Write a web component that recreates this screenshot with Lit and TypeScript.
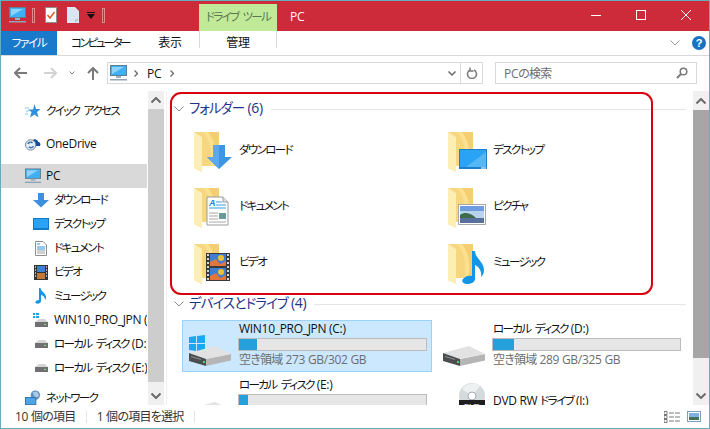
import { LitElement, html, css, svg } from 'lit';
import { customElement } from 'lit/decorators.js';

// kana in the reference font is much narrower than Noto's, so runs get their own tracking
const jp = (text: string) =>
  text
    .split(/([\u30A0-\u30FF]+(?: [\u30A0-\u30FF]+)*|[\u3040-\u309F\u4E00-\u9FFF]+)/)
    .filter((p) => p)
    .map((p) =>
      /^[\u30A0-\u30FF]/.test(p)
        ? html`<span class="k">${p}</span>`
        : /^[\u3040-\u309F\u4E00-\u9FFF]/.test(p)
          ? html`<span class="h">${p}</span>`
          : p
    );

const folderBack = svg`
  <path d="M0 0H25V34H8V40L0 36Z" fill="#f6d77f"/>
  <path d="M9 0H25V34H16C19 24 17 8 9 0Z" fill="#fbe08f"/>
  <path d="M14 0H25V34H20C23 22 21 8 14 0Z" fill="#f3cf72"/>
  <path d="M0 0L8 5V40L0 36Z" fill="#fdeeb4"/>
  <path d="M8 34H14V40H8Z" fill="#ffffff"/>`;

const overlays: Record<string, unknown> = {
  down: svg`<path d="M19 13H31V25H38L25 37L13 25H19Z" fill="#3e95e4"/><path d="M19 13H25V37L13 25H19Z" fill="#5aa9ec"/>`,
  desktop: svg`<g transform="translate(-4 0)"><rect x="15" y="17" width="28" height="20" fill="#1c7fcb"/><rect x="16" y="18" width="26" height="17" fill="#2ba3f5"/><path d="M22 35L42 20V35Z" fill="#54b8f7"/><rect x="37" y="35.500" width="5" height="1" fill="#fff"/></g>`,
  doc: svg`<path d="M13 9H29L34 14V37H13Z" fill="#fff" stroke="#9b9b9b"/><path d="M29 9V14H34" fill="#e4e4e4" stroke="#9b9b9b"/><text x="15" y="18" font-size="9" font-weight="700" font-style="italic" fill="#1f7fd6" font-family="Liberation Sans">A</text><path d="M22 14H28M22 17H32M15 20H32" stroke="#3f9be3"/><path d="M15 25H24M15 28H24M15 31H24M15 34H32" stroke="#a8a8a8"/><rect x="25" y="25" width="7" height="6" fill="#6b9a9a"/>`,
  film: svg`<rect x="12" y="9" width="24" height="28" fill="#3a3a3a"/><rect x="16" y="10" width="16" height="12" fill="#3d7fd6"/><rect x="16" y="24" width="16" height="12" fill="#3d7fd6"/><path d="M16 22V18L22 15L26 20L32 17V22ZM16 36V32L22 29L26 34L32 31V36Z" fill="#e2763a"/><circle cx="27" cy="14" r="3" fill="#f0c030"/><circle cx="27" cy="28" r="3" fill="#f0c030"/><path d="M13 11h2M13 15h2M13 19h2M13 23h2M13 27h2M13 31h2M13 35h2M33 11h2M33 15h2M33 19h2M33 23h2M33 27h2M33 31h2M33 35h2" stroke="#d8d8d8" stroke-width="2"/>`,
  picture: svg`<g transform="translate(-4 0)"><rect x="14.500" y="16.500" width="27" height="20" fill="#fff" stroke="#a8a8a8"/><rect x="16" y="18" width="24" height="17" fill="#b8d4ec"/><rect x="16" y="18" width="24" height="5" fill="#6f9be0"/><path d="M16 27C22 23 28 26 32 30H40V31H16Z" fill="#3f6a4c"/><rect x="16" y="30" width="24" height="5" fill="#57719a"/></g>`,
  music: svg`<path d="M24 7H27C27 14 36 18 36 26C36 29 35 31 33 33C34 27 31 23 27 21V35C27 38 23 40 19 40C15 40 13 37 15 35C17 32 21 31 24 32Z" fill="#1296e8"/>`,
};

const folderIcon = (kind: string) => html`<svg class="folder" width="45" height="50" viewBox="0 0 45 50">${folderBack}${overlays[kind]}</svg>`;

const pcIcon = html`<svg width="17" height="16" viewBox="0 0 17 16"><rect x=".5" y=".5" width="16" height="10" fill="#3fb0f4" stroke="#5f7f96"/><path d="M2 9L14 2H2Z" fill="#8ed3fa"/><rect x="6" y="11" width="5" height="2" fill="#9db2c0"/><rect y="14" width="17" height="1.500" fill="#8fa5b5"/></svg>`;

const driveSmall = html`<svg width="15" height="10" viewBox="0 0 15 10"><path d="M1 4L5 1H11L14 4Z" fill="#d4d4d4"/><rect x="1" y="4" width="13" height="5" fill="#707070"/><rect x="10" y="6" width="2" height="1" fill="#7fe07f"/></svg>`;

const navIcons: Record<string, unknown> = {
  star: html`<svg width="16" height="16" viewBox="0 0 16 16"><path d="M9.500 1L11 6H15.500L12 9L13.500 14.500L9.500 11.500L5 14.500L6.500 9L3 6.500H8Z" fill="#2f8fe0"/><path d="M0 5H4M1 8H4M0 11H3" stroke="#8fc4ee"/></svg>`,
  cloud: html`<svg width="17" height="16" viewBox="0 0 17 16"><path d="M7 6C8 2 13 2 14 6C16 6 17 8 16 10H7Z" fill="#0f4f9c"/><circle cx="6" cy="9" r="5.500" fill="#e8eef5" stroke="#6e8092"/><path d="M3 8A3 3 0 0 1 8 7M9 10A3 3 0 0 1 4 11" stroke="#2f6fb5" fill="none" stroke-width="1.500"/></svg>`,
  pc: pcIcon,
  down: html`<svg width="16" height="16" viewBox="0 0 16 16"><path d="M5 1H11V8H16L8 15.500L0 8H5Z" fill="#3e8fdf"/></svg>`,
  desktop: html`<svg width="16" height="12" viewBox="0 0 16 12"><rect width="16" height="12" fill="#1479c4"/><rect x="1" y="1" width="14" height="9" fill="#2ba3f5"/></svg>`,
  doc: html`<svg width="12" height="15" viewBox="0 0 12 15"><path d="M.5 .5H8L11.500 4V14.500H.5Z" fill="#fff" stroke="#8c8c8c"/><path d="M2 3H5M2 6H10M2 8H10" stroke="#2f8fe0"/><path d="M2 10H10M2 12H10" stroke="#a0a0a0"/></svg>`,
  film: html`<svg width="14" height="15" viewBox="0 0 14 15"><rect width="14" height="15" fill="#333"/><rect x="3" y="1" width="8" height="6" fill="#3d7fd6"/><rect x="3" y="8" width="8" height="6" fill="#c0783a"/><path d="M1 2h1M1 5h1M1 8h1M1 11h1M12 2h1M12 5h1M12 8h1M12 11h1" stroke="#ddd" stroke-width="1.500"/></svg>`,
  music: html`<svg width="12" height="16" viewBox="0 0 12 16"><path d="M4 0H5.500C6 4 11 5 11 9C11 10.500 10.500 11.500 10 12C10 9 8 7.500 6 7V13C6 15 3.500 16 1.500 15.500C-.5 15 0 12.500 4 12Z" fill="#1296e8"/></svg>`,
  winDrive: html`<svg width="16" height="15" viewBox="0 0 16 15"><path d="M0 0h2v2H0zM3 0h3v2H3zM0 3h2v2H0zM3 3h3v2H3z" fill="#18a0e8"/><g transform="translate(1 5)">${driveSmall}</g></svg>`,
  drive: html`<svg width="16" height="10" viewBox="0 0 16 10"><g transform="translate(1 0)">${driveSmall}</g></svg>`,
  network: html`<svg width="17" height="16" viewBox="0 0 17 16"><circle cx="11" cy="5" r="5" fill="#5e93c4"/><path d="M8 2L13 1L15 6L11 8Z" fill="#a9cbe6"/><rect x=".5" y="7.500" width="11" height="7.500" fill="#4ba5ea" stroke="#3a6f9c"/></svg>`,
};

const bigDrive = (win: boolean) => html`<svg width="46" height="34" viewBox="0 0 46 34">
  ${win ? svg`<path d="M1 2L8 1V8H1ZM9 1L17 0V8H9ZM1 9H8V16L1 15ZM9 9H17V17L9 16Z" fill="#18a9ee"/>` : ''}
  <path d="M18 24L43 19V25.500L18 31Z" fill="#b5b5b5"/>
  <path d="M1 18L27 11L43 19L18 24Z" fill="#e2e2e2"/>
  <path d="M1 18L18 24V31L1 26Z" fill="#4b4d4f"/>
  <path d="M3 21L13 24V25L3 22Z" fill="#8d8f91"/>
  <rect x="15" y="26" width="2" height="2" fill="#4bd06b"/>
</svg>`;

const dvdIcon = html`<svg width="46" height="34" viewBox="0 0 46 34"><circle cx="30" cy="13" r="13" fill="#d5dadd"/><path d="M30 13L20 6A13 13 0 0 1 38 3Z" fill="#eef1f2"/><circle cx="30" cy="13" r="4" fill="#fff" stroke="#a5adb3"/><rect x="17" y="17" width="26" height="10" fill="#1e1e1e"/><text x="30" y="25.500" text-anchor="middle" font-size="8" fill="#fff" font-family="Liberation Sans">DVD</text></svg>`;

const navItems = [
  { icon: 'star', label: 'クイック アクセス', cls: 'top' },
  { icon: 'cloud', label: 'OneDrive', cls: 'top gap' },
  { icon: 'pc', label: 'PC', cls: 'top sel' },
  { icon: 'down', label: 'ダウンロード', cls: 'sub' },
  { icon: 'desktop', label: 'デスクトップ', cls: 'sub' },
  { icon: 'doc', label: 'ドキュメント', cls: 'sub' },
  { icon: 'film', label: 'ビデオ', cls: 'sub' },
  { icon: 'music', label: 'ミュージック', cls: 'sub' },
  { icon: 'winDrive', label: 'WIN10_PRO_JPN (C:)', cls: 'sub' },
  { icon: 'drive', label: 'ローカル ディスク (D:)', cls: 'sub' },
  { icon: 'drive', label: 'ローカル ディスク (E:)', cls: 'sub' },
  { icon: 'network', label: 'ネットワーク', cls: 'top net' },
];

const folders = [
  { kind: 'down', label: 'ダウンロード' },
  { kind: 'desktop', label: 'デスクトップ' },
  { kind: 'doc', label: 'ドキュメント' },
  { kind: 'picture', label: 'ピクチャ' },
  { kind: 'film', label: 'ビデオ' },
  { kind: 'music', label: 'ミュージック' },
];

const drives = [
  { name: 'WIN10_PRO_JPN (C:)', used: 9.6, free: '空き領域 273 GB/302 GB', win: true, sel: true },
  { name: 'ローカル ディスク (D:)', used: 11, free: '空き領域 289 GB/325 GB', win: false, sel: false },
  { name: 'ローカル ディスク (E:)', used: 5, free: '', win: false, sel: false },
  { name: 'DVD RW ドライブ (J:)', used: -1, free: '', win: false, sel: false },
];

const chev = (cls: string) => html`<svg class=${cls} width="10" height="6" viewBox="0 0 10 6"><path d="M.5 .5L5 5L9.500 .5" fill="none" stroke="currentColor"/></svg>`;

@customElement('app-root')
export class AppRoot extends LitElement {
  static styles = css`
    :host {
      display: block;
      width: 710px;
      height: 429px;
      font-family: "Open Sans", "Noto Sans CJK JP", sans-serif;
      font-size: 12px;
      font-feature-settings: "palt";
      letter-spacing: -0.3px;
      color: #111;
      overflow: hidden;
    }
    .k { font-size: 0.96em; letter-spacing: var(--k, -0.14em); word-spacing: 0.25em; }
    .h { letter-spacing: -0.06em; }
    .t { display: inline-block; transform: translateY(-1px); }
    .win {
      box-sizing: border-box;
      width: 710px;
      height: 429px;
      border: 1px solid #66adc0;
      display: flex;
      flex-direction: column;
      background: #fff;
    }
    .title {
      height: 30px;
      flex: none;
      background: #cd2b3a;
      display: flex;
      color: #fff;
    }
    .qat { display: flex; align-items: center; padding: 0 0 2px 8px; width: 190px; }
    .qat .sep { width: 1px; height: 13px; border: 1px solid #e28a92; margin: 0 10px 0 6px; }
    .tool-tab {
      --k: -0.15em;
      width: 78px;
      margin-top: 3px;
      background: #c0ea98;
      color: #5d7650;
      display: flex;
      align-items: center;
      justify-content: center;
    }
    .caption { margin-left: 13px; line-height: 32px; font-size: 12px; }
    .controls { margin-left: auto; display: flex; align-items: center; gap: 35px; padding: 0 18px 2px 0; }
    .tabs {
      height: 24px;
      flex: none;
      display: flex;
      align-items: center;
      border-bottom: 1px solid #d9d9d9;
      position: relative;
    }
    .tab { text-align: center; line-height: 24px; white-space: nowrap; }
    .tab.file { --k: -0.11em; width: 56px; height: 24px; background: #1979ca; color: #fff; align-self: flex-start; }
    .tab.comp { --k: -0.2em; width: 58px; margin-left: 14px; }
    .tab.view { width: 24px; margin-left: 29px; }
    .tab.manage {
      width: 76px;
      height: 17px;
      line-height: 24px;
      margin-left: 17px;
      align-self: flex-start;
      border: solid #d9d9d9;
      border-width: 0 1px;
    }
    .ribbon-right { margin-left: auto; display: flex; align-items: center; gap: 12px; padding-right: 3px; color: #9a9a9a; }
    .help {
      width: 14px;
      height: 14px;
      border-radius: 50%;
      background: #1a72c4;
      color: #fff;
      font: 700 11px/14px "Liberation Sans", sans-serif;
      text-align: center;
    }
    .bar {
      height: 35px;
      flex: none;
      display: flex;
      align-items: flex-start;
      padding-top: 6px;
      box-sizing: border-box;
    }
    .nav-btns { width: 106px; height: 22px; display: flex; align-items: center; padding-left: 13px; box-sizing: border-box; }
    .addr {
      width: 376px;
      height: 22px;
      box-sizing: border-box;
      border: 1px solid #d9d9d9;
      display: flex;
      align-items: center;
      padding-left: 2px;
    }
    .addr .pc { margin-right: 7px; display: flex; }
    .addr .crumb { margin: 0 9px 0 9px; }
    .addr .end { margin-left: auto; display: flex; align-items: center; align-self: stretch; }
    .addr .refresh {
      width: 21px;
      align-self: stretch;
      display: flex;
      align-items: center;
      justify-content: center;
      border-left: 1px solid #d9d9d9;
      margin-left: 4px;
    }
    .search {
      width: 202px;
      height: 22px;
      box-sizing: border-box;
      border: 1px solid #d9d9d9;
      margin-left: 12px;
      padding: 0 8px;
      display: flex;
      align-items: center;
      justify-content: space-between;
      color: #6d6d6d;
    }
    .body { flex: 1; min-height: 0; display: flex; overflow: hidden; position: relative; }
    .nav { width: 146px; flex: none; padding-top: 8px; overflow: hidden; box-sizing: border-box; }
    .row { height: 24px; display: flex; align-items: center; white-space: nowrap; overflow: hidden; }
    .row.top { padding-left: 24px; }
    .row.sub { padding-left: 32px; }
    .row .ic { width: 16px; flex: none; display: flex; justify-content: center; margin-right: 5px; }
    .row.gap { margin-top: 9px; }
    .row.sel { margin-top: 8px; background: #d9d9d9; }
    .row.net { margin-top: 6px; }
    .sb { width: 16px; flex: none; background: #f0f0f0; display: flex; flex-direction: column; align-items: center; color: #6a6a6a; }
    .sb .btn { height: 18px; flex: none; display: flex; align-items: center; justify-content: center; }
    .sb .btn path { stroke-width: 2; }
    .sb .flip { transform: rotate(180deg); }
    .sb .thumb { background: #cdcdcd; width: 100%; }
    .sb .fill { flex: 1; }
    .sb.nav-sb { margin-left: 1px; }
    .sb.nav-sb .thumb { height: 273px; }
    .sb.main-sb .thumb { height: 248px; background: #a6a6a6; }
    .sb.main-sb .btn.first { height: 19px; }
    .main {
      flex: 1;
      min-width: 0;
      margin-left: 2px;
      border-left: 1px solid #f0f0f0;
      padding: 7px 0 0 7px;
      overflow: hidden;
      box-sizing: border-box;
    }
    .group { --k: -0.07em; display: flex; align-items: center; height: 22px; color: #1e3287; font-size: 14px; margin-right: 7px; }
    .group svg { color: #8a8a8a; margin-right: 5px; }
    .group .t { transform: translateY(-2px); }
    .group i { flex: 1; height: 1px; background: #e5e5e5; margin-left: 8px; }
    .folders {
      display: grid;
      grid-template-columns: 254px 254px;
      grid-auto-rows: 40px;
      row-gap: 16px;
      margin: 12px 0 9px 20px;
    }
    .fitem { display: flex; }
    .fitem .t { margin-top: 10px; }
    .folder { flex: none; }
    .drives {
      display: grid;
      grid-template-columns: 250px 250px;
      grid-auto-rows: 52px;
      gap: 4px;
      margin: 5px 0 0 8px;
    }
    .tile { box-sizing: border-box; border: 1px solid transparent; display: flex; }
    .tile.sel { background: #cce8ff; border-color: #99d1ff; }
    .tile .pic { width: 55px; flex: none; padding: 14px 0 0 5px; box-sizing: border-box; }
    .tile .pic.disc { padding-top: 6px; }
    .tile .info { flex: 1; padding-right: 4px; }
    .name { line-height: 17px; white-space: nowrap; padding-left: 1px; }
    .name.low { margin-top: 16px; }
    .meter { height: 13px; box-sizing: border-box; border: 1px solid #bcbcbc; background: #e6e6e6; }
    .meter div { height: 100%; background: #26a0da; }
    .free { color: #6d6d6d; line-height: 20px; white-space: nowrap; padding-left: 1px; }
    .status {
      height: 23px;
      flex: none;
      display: flex;
      align-items: center;
      padding: 0 0 0 14px;
      color: #333;
    }
    .status .div { width: 1px; height: 12px; background: #e5e5e5; margin: 0 10px; }
    .status .views { margin-left: auto; display: flex; gap: 7px; padding-right: 8px; align-items: center; }
    .annot {
      position: absolute;
      left: 169px;
      top: 1px;
      width: 483px;
      height: 203px;
      box-sizing: border-box;
      border: 2px solid #d9000f;
      border-radius: 11px;
      pointer-events: none;
    }
  `;

  render() {
    return html`<div class="win">
      <div class="title">
        <div class="qat">
          ${pcIcon}
          <span class="sep"></span>
          <svg width="12" height="16" viewBox="0 0 12 16"><rect x=".5" y=".5" width="11" height="15" fill="#fff" stroke="#8f8f8f"/><path d="M2.500 8L5 11L9.500 5" fill="none" stroke="#e0592a" stroke-width="1.500"/></svg>
          <svg style="margin-left:10px" width="12" height="16" viewBox="0 0 12 16"><path d="M0 0H8L12 4V16H0Z" fill="#d9e6f3"/><path d="M8 12H12L8 16Z" fill="#b7c8d8"/></svg>
          <svg style="margin-left:8px" width="8" height="7" viewBox="0 0 8 7"><rect width="8" height="1" fill="#111"/><path d="M0 2H8L4 7Z" fill="#111"/></svg>
          <span class="sep" style="margin-left:7px"></span>
        </div>
        <div class="tool-tab"><span class="t">${jp('ドライブ ツール')}</span></div>
        <div class="caption">PC</div>
        <div class="controls">
          <svg width="10" height="10" viewBox="0 0 10 10"><path d="M0 5.500H10" stroke="#fff"/></svg>
          <svg width="10" height="10" viewBox="0 0 10 10"><rect x=".5" y=".5" width="9" height="9" fill="none" stroke="#fff"/></svg>
          <svg width="10" height="10" viewBox="0 0 10 10"><path d="M0 0L10 10M10 0L0 10" stroke="#fff"/></svg>
        </div>
      </div>
      <div class="tabs">
        <div class="tab file">${jp('ファイル')}</div>
        <div class="tab comp">${jp('コンピューター')}</div>
        <div class="tab view">表示</div>
        <div class="tab manage">管理</div>
        <div class="ribbon-right">${chev('')}<div class="help">?</div></div>
      </div>
      <div class="bar">
        <div class="nav-btns">
          <svg width="13" height="12" viewBox="0 0 13 12"><path d="M6 1L1 6L6 11M1 6H13" fill="none" stroke="#7a7a7a" stroke-width="2"/></svg>
          <svg style="margin-left:17px" width="13" height="12" viewBox="0 0 13 12"><path d="M7 1L12 6L7 11M0 6H12" fill="none" stroke="#d3d3d3" stroke-width="2"/></svg>
          <svg style="margin-left:12px;color:#8a8a8a" width="6" height="4" viewBox="0 0 6 4"><path d="M.5 .5L3 3L5.500 .5" fill="none" stroke="currentColor"/></svg>
          <svg style="margin-left:12px" width="12" height="13" viewBox="0 0 12 13"><path d="M1 6L6 1L11 6M6 1V13" fill="none" stroke="#7a7a7a" stroke-width="2"/></svg>
        </div>
        <div class="addr">
          <span class="pc">${pcIcon}</span>
          <svg width="4" height="7" viewBox="0 0 4 7"><path d="M.5 .5L3.500 3.500L.5 6.500" fill="none" stroke="#6a6a6a" stroke-width="1.300"/></svg>
          <span class="crumb">PC</span>
          <svg width="4" height="7" viewBox="0 0 4 7"><path d="M.5 .5L3.500 3.500L.5 6.500" fill="none" stroke="#6a6a6a" stroke-width="1.300"/></svg>
          <div class="end">
            <svg width="8" height="5" viewBox="0 0 8 5"><path d="M.5 .5L4 4L7.500 .5" fill="none" stroke="#6a6a6a" stroke-width="1.500"/></svg>
            <div class="refresh"><svg width="12" height="12" viewBox="0 0 12 12"><path d="M4 2.500A4.500 4.500 0 1 0 8 2.500M4 0V3.500H7.500" fill="none" stroke="#7a7a7a" stroke-width="1.500" transform="translate(0 .5)"/></svg></div>
          </div>
        </div>
        <div class="search">
          <span>${jp('PCの検索')}</span>
          <svg width="12" height="12" viewBox="0 0 12 12"><circle cx="7.500" cy="4.500" r="3.300" fill="none" stroke="#7a7a7a" stroke-width="1.500"/><path d="M5 7L1 11" stroke="#7a7a7a" stroke-width="2"/></svg>
        </div>
      </div>
      <div class="body">
        <div class="nav">
          ${navItems.map(
            (n) => html`<div class="row ${n.cls}"><span class="ic">${navIcons[n.icon]}</span><span class="t">${jp(n.label)}</span></div>`
          )}
        </div>
        <div class="sb nav-sb">
          <div class="btn">${chev('flip')}</div>
          <div class="thumb"></div>
          <div class="fill"></div>
          <div class="btn">${chev('')}</div>
        </div>
        <div class="main">
          <div class="group">${chev('')}<span class="t">${jp('フォルダー (6)')}</span><i></i></div>
          <div class="folders">
            ${folders.map(
              (f) => html`<div class="fitem">${folderIcon(f.kind)}<span class="t">${jp(f.label)}</span></div>`
            )}
          </div>
          <div class="group">${chev('')}<span class="t">${jp('デバイスとドライブ (4)')}</span><i></i></div>
          <div class="drives">
            ${drives.map(
              (d) => html`<div class="tile ${d.sel ? 'sel' : ''}">
                <div class="pic ${d.used < 0 ? 'disc' : ''}">${d.used < 0 ? dvdIcon : bigDrive(d.win)}</div>
                <div class="info">
                  <div class="name ${d.used < 0 ? 'low' : ''}"><span class="t">${jp(d.name)}</span></div>
                  ${d.used >= 0
                    ? html`<div class="meter"><div style="width:${d.used}%"></div></div>`
                    : ''}
                  <div class="free"><span class="t">${jp(d.free)}</span></div>
                </div>
              </div>`
            )}
          </div>
        </div>
        <div class="sb main-sb">
          <div class="btn first">${chev('flip')}</div>
          <div class="thumb"></div>
          <div class="fill"></div>
          <div class="btn">${chev('')}</div>
        </div>
        <div class="annot"></div>
      </div>
      <div class="status">
        <span class="t">${jp('10 個の項目')}</span><span class="div"></span><span class="t">${jp('1 個の項目を選択')}</span><span class="div"></span>
        <div class="views">
          <svg width="16" height="12" viewBox="0 0 16 12"><path d="M0 .5H3V3.500H0ZM0 4.500H3V7.500H0ZM0 8.500H3V11.500H0Z" fill="#fff" stroke="#777"/><path d="M5 2H10M11 2H16M5 6H10M11 6H16M5 10H10M11 10H16" stroke="#7a7a7a"/></svg>
          <svg width="14" height="11" viewBox="0 0 14 11"><rect x=".5" y=".5" width="13" height="10" fill="#fff" stroke="#7f9fbf"/><rect x="2" y="2" width="10" height="4" fill="#7fb0e0"/><rect x="2" y="6" width="10" height="3" fill="#46705a"/></svg>
        </div>
      </div>
    </div>`;
  }
}
